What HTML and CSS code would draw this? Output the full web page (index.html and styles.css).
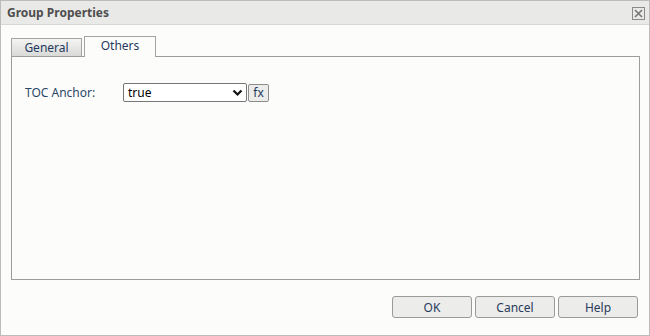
FILE: index.html
```html
<!DOCTYPE html>
<html>
<head>
<meta charset="utf-8">
<link rel="stylesheet" href="styles.css">
</head>
<body>
<div class="dialog">
  <div class="titlebar">
    <span class="title">Group Properties</span>
    <span class="close"><svg width="9" height="9" viewBox="0 0 9 9"><path d="M1 1L8 8M8 1L1 8" stroke="#777" stroke-width="1.6"/></svg></span>
  </div>
  <div class="body">
    <div class="tabs">
      <div class="tab">General</div>
      <div class="tab active">Others</div>
    </div>
    <div class="panel">
      <div class="row">
        <label class="label">TOC Anchor:</label>
        <div class="select"><span>true</span><svg width="11" height="8" viewBox="0 0 11 8"><path d="M1.5 1.5L5.5 5.5L9.5 1.5" fill="none" stroke="#111" stroke-width="2.2"/></svg></div>
        <button class="fx">fx</button>
      </div>
    </div>
  </div>
  <div class="footer">
    <button class="btn">OK</button>
    <button class="btn">Cancel</button>
    <button class="btn">Help</button>
  </div>
</div>
</body>
</html>
```
FILE: styles.css
```css
* { box-sizing: border-box; }
html, body { margin: 0; padding: 0; }
body { font-family: "Noto Sans", "Liberation Sans", sans-serif; font-size: 12px; background: #fff; }
.dialog {
  width: 650px; height: 336px;
  border: 1px solid #bcbcbc;
  background: #fcfdfb;
  display: flex; flex-direction: column;
}
.titlebar {
  height: 24px;
  background: #e9e9e7;
  border-bottom: 1px solid #d7d7d5;
  display: flex; align-items: center; justify-content: space-between;
  padding: 0 4px 0 6px;
}
.title { font-weight: bold; color: #4e4e4e; font-size: 12px; }
.close {
  width: 13px; height: 13px;
  border: 1px solid #8a8a8a;
  display: flex; align-items: center; justify-content: center;
  margin-top: 1px;
}
.body { padding: 10px 9px 0 10px; }
.tabs { display: flex; align-items: flex-end; gap: 2px; height: 21px; }
.tab {
  height: 18px; width: 71px;
  border: 1px solid #a3a3a3; border-bottom: none;
  background: linear-gradient(#f4f4f2, #d9d9d7);
  color: #1f3a5e;
  display: flex; align-items: center; justify-content: center;
  padding-bottom: 1px;
}
.tab.active {
  height: 21px; width: 72px;
  background: #fcfdfb;
  position: relative; top: 1px; z-index: 1;
  padding-bottom: 3px;
}
.panel {
  height: 224px;
  border: 1px solid #9c9c9c;
  background: #fcfdfb;
  padding: 26px 0 0 13px;
}
.row { display: flex; align-items: center; }
.label { color: #2a4766; width: 98px; }
.select {
  width: 124px; height: 19px;
  border: 1px solid #767676; border-radius: 2px;
  background: #fff;
  display: flex; align-items: center; justify-content: space-between;
  padding: 0 3px 0 4px;
  color: #000; font-size: 12px;
}
.fx {
  width: 21px; height: 18px; margin-left: 1px;
  border: 1px solid #8c8c8c; border-radius: 2px;
  background: #ececea;
  color: #1f3a5e; font-family: inherit; font-size: 12px;
  padding: 0; line-height: 14px;
}
.footer {
  display: flex; justify-content: flex-end; gap: 3px;
  padding: 16px 11px 0 0;
}
.btn {
  width: 80px; height: 22px;
  border: 1px solid #9a9a9a; border-radius: 3px;
  background: #ececea;
  color: #2a3a5a;
  font-family: inherit; font-size: 12px;
  padding: 0;
}
```
